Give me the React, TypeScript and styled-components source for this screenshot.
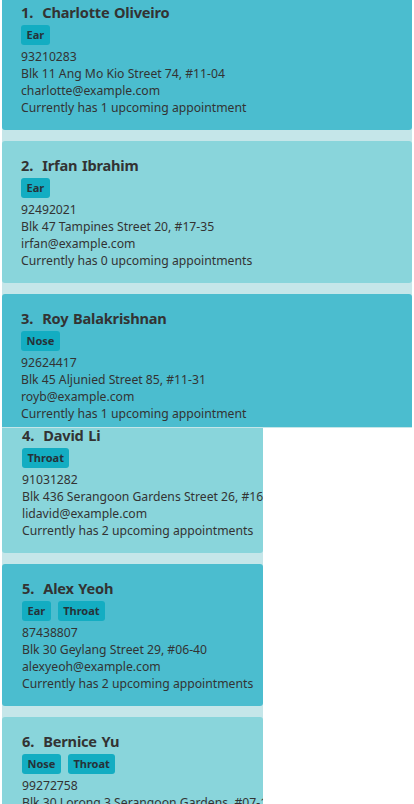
import React from "react";
import styled, { createGlobalStyle } from "styled-components";

const Global = createGlobalStyle`
  html, body { margin: 0; padding: 0; background: #ffffff; }
  body { font-family: "Noto Sans", "Open Sans", sans-serif; }
`;

const Viewport = styled.div`
  width: 414px;
  height: 804px;
  overflow: hidden;
  background: #ffffff;
`;

const List = styled.div`
  display: flex;
  flex-direction: column;
  margin-top: -12px;
  padding-left: 2px;
`;

const Row = styled.div<{ $w: number; $gap: number }>`
  width: ${(p) => p.$w}px;
  background: #c5e6e9;
  padding-bottom: ${(p) => p.$gap}px;
`;

const Card = styled.div<{ $dark: boolean; $clipTop: number; $clipBottom: number }>`
  height: ${(p) => 142 - p.$clipTop - p.$clipBottom}px;
  overflow: hidden;
  background: ${(p) => (p.$dark ? "#4bbdcf" : "#89d5db")};
  border-radius: ${(p) => (p.$clipTop ? "0 0 3px 3px" : p.$clipBottom ? "3px 3px 0 0" : "3px")};
`;

const Inner = styled.div<{ $clipTop: number; $indent: number }>`
  margin-top: ${(p) => -p.$clipTop}px;
  padding: 14px 0 14px ${(p) => p.$indent}px;
  display: flex;
  flex-direction: column;
  align-items: flex-start;
  color: #333333;
  white-space: nowrap;
`;

const Title = styled.div`
  font-size: 14.6px;
  font-weight: 700;
  line-height: 21px;
  margin-bottom: 2px;
  letter-spacing: -0.2px;
  word-spacing: 1px;
`;

const Tags = styled.div`
  display: flex;
  gap: 7px;
  margin-bottom: 3px;
`;

const Tag = styled.span`
  height: 20px;
  padding: 0 5.5px;
  border-radius: 3px;
  background: #13adc2;
  color: #263238;
  font-size: 11px;
  font-weight: 700;
  line-height: 20px;
`;

const Line = styled.div`
  font-size: 12.2px;
  line-height: 17px;
`;

type Person = {
  name: string;
  tags: string[];
  phone: string;
  address: string;
  email: string;
  appts: number;
};

const people: Person[] = [
  { name: "Charlotte Oliveiro", tags: ["Ear"], phone: "93210283", address: "Blk 11 Ang Mo Kio Street 74, #11-04", email: "charlotte@example.com", appts: 1 },
  { name: "Irfan Ibrahim", tags: ["Ear"], phone: "92492021", address: "Blk 47 Tampines Street 20, #17-35", email: "irfan@example.com", appts: 0 },
  { name: "Roy Balakrishnan", tags: ["Nose"], phone: "92624417", address: "Blk 45 Aljunied Street 85, #11-31", email: "royb@example.com", appts: 1 },
  { name: "David Li", tags: ["Throat"], phone: "91031282", address: "Blk 436 Serangoon Gardens Street 26, #16-43", email: "lidavid@example.com", appts: 2 },
  { name: "Alex Yeoh", tags: ["Ear", "Throat"], phone: "87438807", address: "Blk 30 Geylang Street 29, #06-40", email: "alexyeoh@example.com", appts: 2 },
  { name: "Bernice Yu", tags: ["Nose", "Throat"], phone: "99272758", address: "Blk 30 Lorong 3 Serangoon Gardens, #07-18", email: "berniceyu@example.com", appts: 2 },
];

const layout = [
  { w: 410, gap: 11, clipTop: 0, clipBottom: 0, indent: 19 },
  { w: 410, gap: 11, clipTop: 0, clipBottom: 0, indent: 19 },
  { w: 410, gap: 1, clipTop: 0, clipBottom: 9, indent: 19 },
  { w: 261, gap: 11, clipTop: 17, clipBottom: 0, indent: 20 },
  { w: 261, gap: 11, clipTop: 0, clipBottom: 0, indent: 20 },
  { w: 261, gap: 11, clipTop: 0, clipBottom: 0, indent: 20 },
];

export default function App() {
  return (
    <>
      <Global />
      <Viewport>
        <List>
          {people.map((p, i) => {
            const l = layout[i];
            return (
              <Row key={p.name} $w={l.w} $gap={l.gap}>
                <Card $dark={i % 2 === 0} $clipTop={l.clipTop} $clipBottom={l.clipBottom}>
                  <Inner $clipTop={l.clipTop} $indent={l.indent}>
                    <Title>
                      {i + 1}.&nbsp; {p.name}
                    </Title>
                    <Tags>
                      {p.tags.map((t) => (
                        <Tag key={t}>{t}</Tag>
                      ))}
                    </Tags>
                    <Line>{p.phone}</Line>
                    <Line>{p.address}</Line>
                    <Line>{p.email}</Line>
                    <Line>
                      Currently has {p.appts} upcoming appointment{p.appts === 1 ? "" : "s"}
                    </Line>
                  </Inner>
                </Card>
              </Row>
            );
          })}
        </List>
      </Viewport>
    </>
  );
}
